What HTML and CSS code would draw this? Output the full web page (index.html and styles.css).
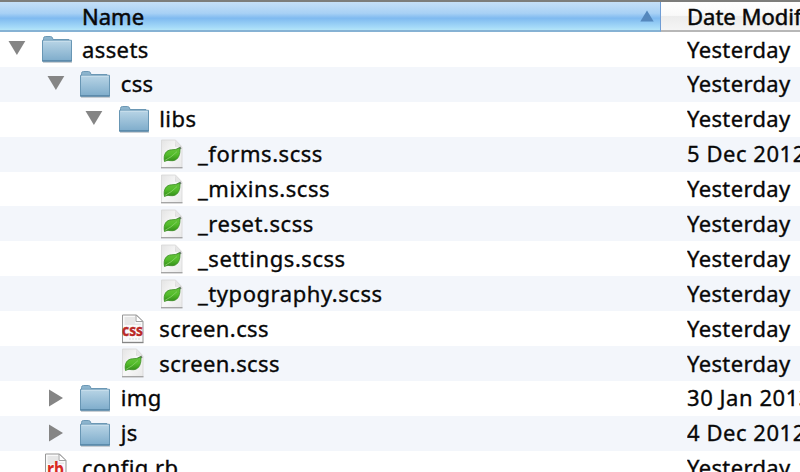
FILE: index.html
```html
<!DOCTYPE html>
<html lang="en">
<head>
<meta charset="utf-8">
<title>assets</title>
<link rel="stylesheet" href="styles.css">
</head>
<body>
<svg class="defs" width="0" height="0" aria-hidden="true">
  <defs>
    <linearGradient id="folderFill" x1="0" y1="0" x2="0" y2="1"><stop offset="0" stop-color="#b9d5e6"/><stop offset="1" stop-color="#7eaccb"/></linearGradient>
    <linearGradient id="pageFill" x1="0" y1="0" x2="1" y2="1"><stop offset="0" stop-color="#e4e4e4"/><stop offset="0.5" stop-color="#f8f8f8"/><stop offset="1" stop-color="#e9e9e9"/></linearGradient>
    <linearGradient id="leafFill" x1="0" y1="0" x2="0" y2="1"><stop offset="0" stop-color="#67c33d"/><stop offset="0.5" stop-color="#54bd2b"/><stop offset="1" stop-color="#318b18"/></linearGradient>
    <symbol id="folder" viewBox="0 0 32 30">
      <path d="M2 27.2H31" stroke="#bcc4ca" stroke-width="1.2"/>
      <path d="M2.5 6V3.5Q2.5 1.5 4.5 1.5H9.5Q11 1.5 11.5 3L12 4.5H28V8H2.5Z" fill="#8cb4cd" stroke="#6c98b5"/>
      <path d="M1.5 5.3H30.5V26H1.5Z" fill="url(#folderFill)" stroke="#6896b4"/>
      <path d="M2.5 6.2H29.5" stroke="#cee2ee"/>
      <path d="M1.2 26H30.8" stroke="#4d7d9e" stroke-width="1.2"/>
    </symbol>
    <symbol id="leaf" viewBox="0 0 24 30">
      <path d="M1.5 1H15.5L22 8V28.5H1.5Z" fill="url(#pageFill)" stroke="#d7d7d7" stroke-width=".8"/>
      <path d="M15 1V7.5H22Z" fill="#d2d2d2"/>
      <path d="M15 1L22 8V10L15.5 7Z" fill="#e6e6e6"/>
      <path d="M1 28.7H22.5" stroke="#a5a5a5" stroke-width="1.4"/>
      <path d="M17 11L21 8.5" stroke="#77807a" stroke-width="2.2"/>
      <path d="M4.5 22.5C3 15 6.5 11 11.5 10.8Q16 11 19.8 8.8C20.6 15 18.5 21 13 21.7C9.5 22 8 20.5 4.5 22.5Z" fill="url(#leafFill)" stroke="#3b8d24" stroke-width=".8"/>
      <path d="M5 21.4Q11 18.5 17 12.6" fill="none" stroke="#8bd06c" stroke-width=".8"/>
    </symbol>
    <symbol id="page" viewBox="0 0 24 30">
      <path d="M1.5 1H15.5L22 7.5V28.3H1.5Z" fill="#fafafa" stroke="#979797"/>
      <path d="M3.5 3H14V9.5H20V11H3.5Z" fill="#e7e7e7"/>
      <path d="M15 1V7.5H22Z" fill="#fff" stroke="#a0a0a0"/>
      <path d="M1 28.6H22.5" stroke="#858585" stroke-width="1.2"/>
      <path d="M8 25H19" stroke="#d7d7d7" stroke-dasharray="2 1"/>
    </symbol>
    <symbol id="open" viewBox="0 0 18 16"><path d="M.5 1H17.3L8.9 15Z" fill="#858585"/></symbol>
    <symbol id="closed" viewBox="0 0 18 18"><path d="M2 .6L16 9L2 17.4Z" fill="#858585"/></symbol>
  </defs>
</svg>
<main class="list">
  <header class="head">
    <div class="head-name"><span>Name</span><svg class="sort" viewBox="0 0 14 12"><path d="M7 .5L13.7 11.5H.3Z" fill="#5588bd"/></svg></div>
    <div class="head-date">Date Modified</div>
  </header>
  <div class="row d0"><svg class="tri"><use href="#open"/></svg><svg class="folder"><use href="#folder"/></svg><span class="name">assets</span><span class="date">Yesterday</span></div>
  <div class="row d1"><svg class="tri"><use href="#open"/></svg><svg class="folder"><use href="#folder"/></svg><span class="name">css</span><span class="date">Yesterday</span></div>
  <div class="row d2"><svg class="tri"><use href="#open"/></svg><svg class="folder"><use href="#folder"/></svg><span class="name">libs</span><span class="date">Yesterday</span></div>
  <div class="row d3"><svg class="file"><use href="#leaf"/></svg><span class="name">_forms.scss</span><span class="date num">5 Dec 2012</span></div>
  <div class="row d3"><svg class="file"><use href="#leaf"/></svg><span class="name">_mixins.scss</span><span class="date">Yesterday</span></div>
  <div class="row d3"><svg class="file"><use href="#leaf"/></svg><span class="name">_reset.scss</span><span class="date">Yesterday</span></div>
  <div class="row d3"><svg class="file"><use href="#leaf"/></svg><span class="name">_settings.scss</span><span class="date">Yesterday</span></div>
  <div class="row d3"><svg class="file"><use href="#leaf"/></svg><span class="name">_typography.scss</span><span class="date">Yesterday</span></div>
  <div class="row d2"><svg class="file" viewBox="0 0 24 30"><use href="#page"/><text class="css-mark" x="1" y="21.5" textLength="21" lengthAdjust="spacingAndGlyphs">css</text></svg><span class="name">screen.css</span><span class="date">Yesterday</span></div>
  <div class="row d2"><svg class="file"><use href="#leaf"/></svg><span class="name">screen.scss</span><span class="date">Yesterday</span></div>
  <div class="row d1"><svg class="tri right"><use href="#closed"/></svg><svg class="folder"><use href="#folder"/></svg><span class="name">img</span><span class="date num">30 Jan 2013</span></div>
  <div class="row d1"><svg class="tri right"><use href="#closed"/></svg><svg class="folder"><use href="#folder"/></svg><span class="name">js</span><span class="date num">4 Dec 2012</span></div>
  <div class="row d0"><svg class="file" viewBox="0 0 24 30"><use href="#page"/><text class="rb-mark" x="3" y="22.5" textLength="17" lengthAdjust="spacingAndGlyphs">rb</text></svg><span class="name">config.rb</span><span class="date">Yesterday</span></div>
</main>
</body>
</html>
```
FILE: styles.css
```css
* { box-sizing: border-box; }
body {
  margin: 0;
  background: #fff;
  color: #080808;
  font-family: "Noto Sans", "Open Sans", sans-serif;
  font-size: 22px;
  -webkit-text-stroke: 0.35px #080808;
}
.defs { display: block; height: 0; }
.list { width: 800px; height: 472px; overflow: hidden; }
.head {
  display: flex;
  height: 32px;
  border-top: 2px solid #7d7d7b;
  line-height: 28px;
  white-space: nowrap;
  -webkit-text-stroke-width: 0.5px;
}
.head-name {
  display: flex;
  align-items: center;
  justify-content: space-between;
  width: 661px;
  padding: 0 6px 0 82px;
  border-right: 1px solid #709dd4;
  border-bottom: 2px solid #86b2d4;
  background: linear-gradient(#c5dff7 0%, #a8d1f5 40%, #7fbaf0 58%, #a5daf8 90%, #b4e5f8 100%);
}
.sort { width: 14px; height: 12px; }
.head-date {
  flex: 1;
  overflow: hidden;
  padding-left: 26px;
  border-bottom: 2px solid #b7b7b7;
  background: linear-gradient(#fff 0%, #f9f9f9 48%, #ececec 52%, #f5f5f5 100%);
}
.row {
  display: flex;
  align-items: center;
  height: 34.9px;
  line-height: 34.9px;
  white-space: nowrap;
}
.row:nth-child(odd) { background: #f3f6fb; }
.d0 { padding-left: 8px; }
.d1 { padding-left: 46.7px; }
.d2 { padding-left: 85.3px; }
.d3 { padding-left: 124px; }
.row svg { flex: none; }
.tri { width: 18px; height: 16px; margin: 0 14.5px 3px 0; }
.right { height: 18px; margin-bottom: 1px; }
.folder { width: 32px; height: 30px; margin: 1px 9.5px 0 0; }
.file { width: 24px; height: 30px; margin: 0 14px 0 36px; }
.name { flex: 1; padding-bottom: 1px; letter-spacing: 0.4px; }
.d3 .name { letter-spacing: 0.55px; }
.date { width: 113px; padding-bottom: 1px; overflow: hidden; letter-spacing: 0.35px; }
.num { letter-spacing: 0.55px; }
.css-mark {
  fill: #bb2a27;
  stroke: #bb2a27;
  stroke-width: 0.4px;
  -webkit-text-stroke: 0;
  font: bold 16px "Noto Sans", sans-serif;
  letter-spacing: 0;
}
.rb-mark {
  fill: #d82a22;
  stroke: none;
  -webkit-text-stroke: 0;
  font: bold 19px "Noto Sans", sans-serif;
}
```
